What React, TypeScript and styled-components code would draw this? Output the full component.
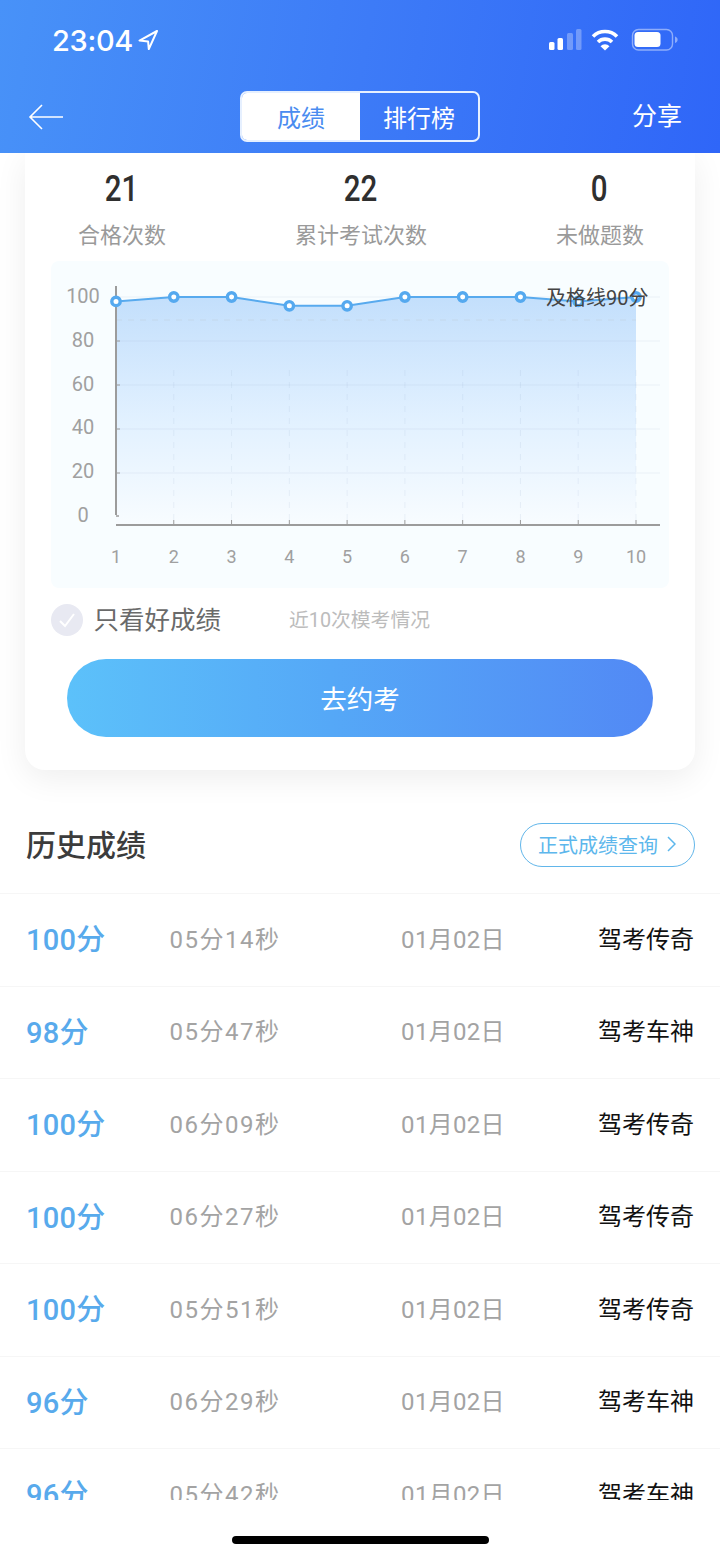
import React from "react";
import styled, { createGlobalStyle } from "styled-components";

const Global = createGlobalStyle`
  html, body { margin: 0; padding: 0; background: #fff; }
  body { font-family: Roboto, "Noto Sans CJK SC", sans-serif; overflow: hidden; }
  * { box-sizing: border-box; }
`;

const Page = styled.div`
  width: 720px;
  height: 1558px;
  display: flex;
  flex-direction: column;
  background: #fff;
  overflow: hidden;
`;

const Header = styled.header`
  position: relative;
  z-index: 1;
  height: 153px;
  flex: none;
  display: flex;
  flex-direction: column;
  color: #fff;
  background: linear-gradient(100deg, #4892f8 0%, #3d7bf7 50%, #2f66f8 100%);
`;

const StatusBar = styled.div`
  height: 80px;
  display: flex;
  align-items: center;
  justify-content: space-between;
  padding: 0 42px 0 52px;
`;

const TimeGroup = styled.div`
  display: flex;
  align-items: center;
  gap: 4px;
`;

const Clock = styled.span`
  font-family: Inter, Roboto, sans-serif;
  font-size: 29px;
  font-weight: 500;
  line-height: 1;
  letter-spacing: -0.3px;
`;

const NavBar = styled.nav`
  height: 73px;
  display: grid;
  grid-template-columns: 1fr 240px 1fr;
  align-items: center;
  padding: 0 38px 0 38px;
`;

const BackSlot = styled.span`
  display: flex;
  margin-left: -10px;
`;

const ShareLabel = styled.span`
  justify-self: end;
  font-size: 25px;
  line-height: 1;
`;

const Tabs = styled.div`
  height: 51px;
  display: grid;
  grid-template-columns: 1fr 1fr;
  border: 2px solid #e6f0ff;
  border-radius: 7px;
  overflow: hidden;
`;

const Tab = styled.div<{ $active?: boolean }>`
  display: flex;
  align-items: center;
  justify-content: center;
  font-size: 24px;
  color: ${(p) => (p.$active ? "#4a8cf0" : "#fff")};
  background: ${(p) => (p.$active ? "#fff" : "transparent")};
`;

const Card = styled.section`
  flex: none;
  height: 617px;
  margin: 0 25px;
  display: flex;
  flex-direction: column;
  background: #fff;
  border-radius: 0 0 20px 20px;
  box-shadow: 0 8px 32px rgba(0, 0, 0, 0.07);
`;

const Stats = styled.div`
  height: 108px;
  flex: none;
  display: grid;
  grid-template-columns: 192px 286px 192px;
`;

const Stat = styled.div`
  display: flex;
  flex-direction: column;
  align-items: center;
`;

const StatValue = styled.span`
  display: inline-block;
  margin-top: 13px;
  height: 46px;
  font-family: Roboto, sans-serif;
  font-weight: 500;
  font-size: 36px;
  line-height: 46px;
  color: #2f2f2f;
  transform: scaleX(0.82);
`;

const StatLabel = styled.span`
  margin-top: 9px;
  padding-left: 2px;
  font-size: 22px;
  line-height: 30px;
  color: #9a9a9a;
`;

const ChartPanel = styled.div`
  flex: none;
  height: 327px;
  margin: 0 26px;
  background: #f8fdff;
  border-radius: 8px;
  overflow: hidden;
`;

const ChartSvg = styled.svg`
  display: block;
  width: 618px;
  height: 327px;
`;

const FilterRow = styled.div`
  flex: none;
  height: 64px;
  display: flex;
  align-items: center;
  padding-left: 26px;
`;

const CheckCircle = styled.span`
  width: 32px;
  height: 32px;
  flex: none;
  display: flex;
  align-items: center;
  justify-content: center;
  border-radius: 50%;
  background: #e8e9f2;
`;

const FilterLabel = styled.span`
  margin: 2px 0 0 10.5px;
  font-size: 25.5px;
  color: #6a6a6a;
  line-height: 1;
`;

const FilterHint = styled.span`
  margin: 2px 0 0 68px;
  font-size: 19.8px;
  color: #bcbcbc;
  line-height: 1;
`;

const PrimaryButton = styled.div`
  flex: none;
  height: 78px;
  margin: 7px 42px 0;
  padding-bottom: 2px;
  display: flex;
  align-items: center;
  justify-content: center;
  border-radius: 39px;
  font-size: 26.5px;
  color: #fff;
  background: linear-gradient(90deg, #5cc1fa 0%, #55a8f7 45%, #5289f5 100%);
`;

const SectionHead = styled.div`
  flex: none;
  height: 123px;
  padding: 27px 25px 0 26px;
  display: flex;
  align-items: center;
  justify-content: space-between;
`;

const SectionTitle = styled.h2`
  margin: 2px 0 0;
  font-size: 30px;
  font-weight: 500;
  color: #3c3c3c;
  line-height: 1;
`;

const QueryPill = styled.div`
  width: 175px;
  height: 44px;
  display: flex;
  align-items: center;
  gap: 9px;
  padding: 0 0 2px 17px;
  border: 1px solid #62b6ea;
  border-radius: 22px;
  font-size: 20px;
  color: #5db7ec;
`;

const List = styled.div`
  flex: none;
  height: 607px;
  overflow: hidden;
`;

const Row = styled.div`
  height: 92.5px;
  display: grid;
  grid-template-columns: 104px 190px 266px 1fr;
  align-items: center;
  padding: 0 26px 5px;
  border-top: 1px solid #f6f6f6;
`;

const Score = styled.span`
  font-size: 29px;
  font-weight: 500;
  letter-spacing: 0.3px;
  color: #58aaec;
  white-space: nowrap;
`;

const Muted = styled.span`
  text-align: center;
  font-size: 24px;
  letter-spacing: 0.3px;
  color: #a3a3a3;
  white-space: nowrap;
`;

const Duration = styled(Muted)`
  letter-spacing: 1.5px;
`;

const Mode = styled.span`
  text-align: right;
  font-size: 24px;
  color: #111;
  white-space: nowrap;
`;

const Footer = styled.footer`
  flex: 1;
  display: flex;
  justify-content: center;
  padding-top: 36px;
`;

const HomeBar = styled.div`
  width: 257px;
  height: 8px;
  border-radius: 4px;
  background: #000;
`;

const xs = Array.from({ length: 10 }, (_, i) => 116 + (520 / 9) * i);
const vals = [98, 100, 100, 96, 96, 100, 100, 100, 98, 100];
const yOf = (v: number) => 297 + (100 - v) * 2.2;
const linePts = xs.map((x, i) => `${x},${yOf(vals[i])}`).join(" ");
const yTicks = [100, 80, 60, 40, 20];
const faint = "rgba(140,165,190,0.13)";

const Chart = () => (
  <ChartSvg viewBox="51 261 618 327">
    <defs>
      <linearGradient id="area" x1="0" y1="0" x2="0" y2="1">
        <stop offset="0" stopColor="#c3dffc" />
        <stop offset="0.55" stopColor="#e2f1ff" />
        <stop offset="1" stopColor="#f8fcff" />
      </linearGradient>
    </defs>
    <polygon points={`116,525 ${linePts} 636,525`} fill="url(#area)" />
    {yTicks.map((t) => (
      <line key={t} x1="116" x2="660" y1={yOf(t)} y2={yOf(t)} stroke={faint} strokeWidth="1" />
    ))}
    {xs.slice(1).map((x) => (
      <line key={x} x1={x} x2={x} y1="370" y2="525" stroke={faint} strokeWidth="1" strokeDasharray="6 6" />
    ))}
    <line x1="116" x2="636" y1="320" y2="320" stroke="#c4d8ec" strokeWidth="1.2" strokeDasharray="6 6" />
    <line x1="116" x2="116" y1="286" y2="515" stroke="#9c9c9c" strokeWidth="2" />
    <line x1="116" x2="660" y1="525" y2="525" stroke="#9c9c9c" strokeWidth="2" />
    <line x1="116" x2="119" y1="516" y2="516" stroke="#9c9c9c" strokeWidth="1.5" />
    {xs.slice(1).map((x) => (
      <line key={x} x1={x} x2={x} y1="520" y2="525" stroke="#9c9c9c" strokeWidth="1" />
    ))}
    {yTicks.slice(1).map((t) => (
      <line key={t} x1="116" x2="120" y1={yOf(t)} y2={yOf(t)} stroke="#9c9c9c" strokeWidth="1" />
    ))}
    <polyline points={linePts} fill="none" stroke="#58aaee" strokeWidth="2" />
    {xs.map((x, i) => (
      <circle key={x} cx={x} cy={yOf(vals[i])} r="4.2" fill="#fff" stroke="#55a9ef" strokeWidth="3.4" />
    ))}
    <g fontFamily="Roboto, sans-serif" fontSize="20" fill="#a0a0a0" textAnchor="middle">
      {[100, 80, 60, 40, 20, 0].map((t, i) => (
        <text key={t} x="83" y={303 + i * 43.8}>{t}</text>
      ))}
      {xs.map((x, i) => (
        <text key={x} x={x} y="563" fontSize="18">{i + 1}</text>
      ))}
    </g>
    <text x="546" y="305" fontFamily="Roboto, Noto Sans CJK SC, sans-serif" fontSize="20" fill="#444">及格线90分</text>
  </ChartSvg>
);

const StatusIcons = () => (
  <svg width="129" height="24" viewBox="549 29 129 24">
    <rect x="549" y="43" width="5.5" height="8" rx="1.5" fill="#fff" />
    <rect x="557.5" y="39" width="5.5" height="12" rx="1.5" fill="#fff" />
    <rect x="567" y="34" width="6" height="17" rx="1.5" fill="#fff" fillOpacity="0.3" />
    <rect x="576" y="30" width="5.5" height="21" rx="1.5" fill="#fff" fillOpacity="0.3" />
    <path d="M593 37.5a17 17 0 0 1 24 0" fill="none" stroke="#fff" strokeWidth="3.6" />
    <path d="M598 43a10 10 0 0 1 14 0" fill="none" stroke="#fff" strokeWidth="3.6" />
    <path d="M600.5 47.2a6.2 6.2 0 0 1 9 0L605 51.5z" fill="#fff" />
    <rect x="632.5" y="30.5" width="40" height="20.5" rx="6" fill="none" stroke="#fff" strokeOpacity="0.45" strokeWidth="1.4" />
    <rect x="634.5" y="33" width="26" height="15" rx="3.5" fill="#fff" />
    <path d="M675 37.5c1.6.4 2.6 1.7 2.6 3.2s-1 2.8-2.6 3.2z" fill="#fff" fillOpacity="0.45" />
  </svg>
);

const LocationArrow = () => (
  <svg width="22" height="22" viewBox="0 0 22 22">
    <path d="M20 2 2.5 11.6l8.6.9.7 7.6z" fill="none" stroke="#fff" strokeWidth="2" strokeLinejoin="round" />
  </svg>
);

const BackArrow = () => (
  <svg width="36" height="28" viewBox="0 0 36 28">
    <path d="M35 14H2M14 2 2 14l12 12" fill="none" stroke="#fff" strokeWidth="1.6" />
  </svg>
);

const Check = () => (
  <svg width="18" height="16" viewBox="0 0 18 16">
    <path d="M2 9l5 5 9-12" fill="none" stroke="#fff" strokeWidth="2" />
  </svg>
);

const Chevron = () => (
  <svg width="9" height="16" viewBox="0 0 9 16">
    <path d="M1 1l7 7-7 7" fill="none" stroke="#5db7ec" strokeWidth="1.5" />
  </svg>
);

const stats = [
  ["21", "合格次数"],
  ["22", "累计考试次数"],
  ["0", "未做题数"],
];

const rows: [number, string][] = [
  [100, "05分14秒"],
  [98, "05分47秒"],
  [100, "06分09秒"],
  [100, "06分27秒"],
  [100, "05分51秒"],
  [96, "06分29秒"],
  [96, "05分42秒"],
];

export default function App() {
  return (
    <Page>
      <Global />
      <Header>
        <StatusBar>
          <TimeGroup>
            <Clock>23:04</Clock>
            <LocationArrow />
          </TimeGroup>
          <StatusIcons />
        </StatusBar>
        <NavBar>
          <BackSlot>
            <BackArrow />
          </BackSlot>
          <Tabs>
            <Tab $active>成绩</Tab>
            <Tab>排行榜</Tab>
          </Tabs>
          <ShareLabel>分享</ShareLabel>
        </NavBar>
      </Header>
      <Card>
        <Stats>
          {stats.map(([value, label]) => (
            <Stat key={label}>
              <StatValue>{value}</StatValue>
              <StatLabel>{label}</StatLabel>
            </Stat>
          ))}
        </Stats>
        <ChartPanel>
          <Chart />
        </ChartPanel>
        <FilterRow>
          <CheckCircle>
            <Check />
          </CheckCircle>
          <FilterLabel>只看好成绩</FilterLabel>
          <FilterHint>近10次模考情况</FilterHint>
        </FilterRow>
        <PrimaryButton>去约考</PrimaryButton>
      </Card>
      <SectionHead>
        <SectionTitle>历史成绩</SectionTitle>
        <QueryPill>
          正式成绩查询
          <Chevron />
        </QueryPill>
      </SectionHead>
      <List>
        {rows.map(([score, time], i) => (
          <Row key={i}>
            <Score>{score}分</Score>
            <Duration>{time}</Duration>
            <Muted>01月02日</Muted>
            <Mode>{score === 100 ? "驾考传奇" : "驾考车神"}</Mode>
          </Row>
        ))}
      </List>
      <Footer>
        <HomeBar />
      </Footer>
    </Page>
  );
}
